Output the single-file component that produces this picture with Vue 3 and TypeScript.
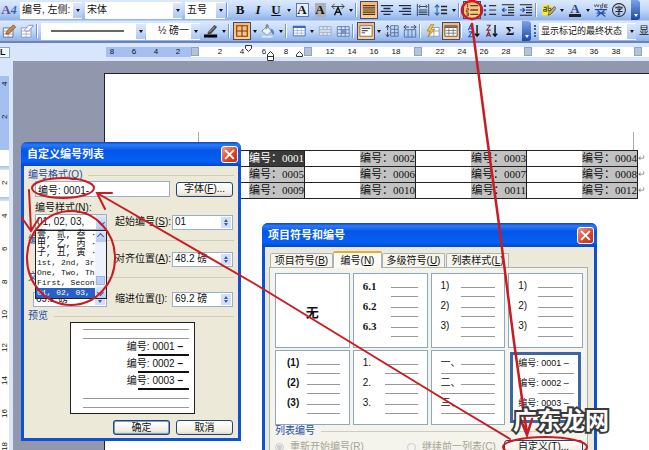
<script setup lang="ts">
import { ref } from 'vue'

interface Shape { d: string; s?: string; f?: string; w?: number }
interface Item { kind: 'icon' | 'glyph' | 'drop' | 'sep'; label?: string; text?: string; cls?: string; on?: boolean; shapes?: Shape[] }

const ink = '#2b3a66'
const sep: Item = { kind: 'sep' }
const drop: Item = { kind: 'drop', label: '更多' }
const icon = (label: string, shapes: Shape[], on = false): Item => ({ kind: 'icon', label, shapes, on })
const glyph = (text: string, cls: string, label: string): Item => ({ kind: 'glyph', text, cls, label })

const formatTools: Item[] = [
  sep,
  glyph('B', 'bold', '加粗'),
  glyph('I', 'ital', '倾斜'),
  glyph('U', 'under', '下划线'),
  drop,
  glyph('A', 'boxed', '字符边框'),
  glyph('A', 'shaded', '字符底纹'),
  icon('字符缩放', [{ d: 'M4 14L8 5L12 14M6 10.5H10', s: '#111', w: 1.6 }, { d: 'M1 4H15M4 1L1 4L4 7M12 1L15 4L12 7', s: '#333' }]),
  drop,
  sep,
  icon('两端对齐', [{ d: 'M1 3H15M1 5.5H15M1 8H15M1 10.5H15M1 13H15', s: '#4a3516', w: 1.4 }], true),
  icon('居中', [{ d: 'M1 3H15M4 6.3H12M1 9.6H15M4 13H12', s: '#222c48', w: 1.6 }]),
  icon('右对齐', [{ d: 'M1 3H15M5 6.3H15M1 9.6H15M5 13H15', s: '#222c48', w: 1.6 }]),
  icon('分散对齐', [{ d: 'M1.5 1V15M14.500 1V15', s: ink }, { d: 'M4 4H12M3 8H13M3 10.5H13M3 13H13', s: '#345', w: 1.4 }, { d: 'M5 2L3 4L5 6M11 2L13 4L11 6', s: ink }]),
  icon('行距', [{ d: 'M3.5 2V14M1 5L3.5 2L6 5M1 11L3.5 14L6 11', s: '#2d5fa8', w: 1.2 }, { d: 'M8 4H15M8 8H15M8 12H15', s: '#222', w: 1.5 }]),
  drop,
  sep,
  icon('编号', [{ d: 'M3 1V5M1.500 6.500H4V8H1.5V10H4M1.5 11.5H4V14.500H1.5M2 13H4', s: '#6b3d10' }, { d: 'M6 3H15M6 8H15M6 13H15', s: '#5a4630', w: 1.6 }], true),
  icon('项目符号', [{ d: 'M1 2H3.500V4.500H1ZM1 7H3.500V9.500H1ZM1 12H3.500V14.500H1Z', f: '#2450a8' }, { d: 'M7 3H15M7 8H15M7 13H15', s: '#333', w: 1.4 }]),
  icon('减少缩进', [{ d: 'M1 2H15M8 5H15M8 8H15M8 11H15M1 14H15', s: '#222', w: 1.4 }, { d: 'M6.5 8H2M4 5.5L1.5 8L4 10.5', s: '#2450a8', w: 1.4 }]),
  icon('增加缩进', [{ d: 'M1 2H15M8 5H15M8 8H15M8 11H15M1 14H15', s: '#222', w: 1.4 }, { d: 'M1 8H6M4 5.5L6.5 8L4 10.5', s: '#2450a8', w: 1.4 }]),
  sep,
  icon('突出显示', [{ d: 'M0 2H11V14H0Z', f: '#f6ea3c' }, { d: 'M2 5H5V9.500H2V7.500H5M7 2.5V9H10V6H7', s: '#554', w: 1.2 }, { d: 'M7 14L8 11L14 4L16 6L10 13Z', f: '#c9a96a', s: '#555' }]),
  drop,
  glyph('A', 'color', '字体颜色'),
  drop,
  icon('拼音指南', [{ d: 'M0 1.5L1.500 4.5L3 1.5L4.500 4.5L6 1.5M10 0V5H7.500V2.5H10M15.500 2H12V5H15.500M12 3.5H15', s: '#555' }, { d: 'M1 7.500H15M8 6V8M4 8.500L13 15.500M12 8.500L3 15.500M3 11.500H13', s: '#2450a8', w: 1.3 }]),
  icon('带圈字符', [{ d: 'M8 0.700A7.300 7.300 0 1 1 7.9 0.700Z', s: '#333', w: 1.2 }, { d: 'M8 3V4.5M4.5 6.300V4.8H11.5V6.300M6 7H10L8 8.5V13H6.5M4 9.8H12', s: '#222', w: 1.2 }]),
]

const tableTools: Item[] = [
  icon('边框颜色', [{ d: 'M4.5 9L12 1L15 3.5L8 11L4 12Z', f: '#444' }, { d: 'M6 9.5L12.500 3', s: '#bbb' }, { d: 'M0 12H15V15.500H0Z', f: '#000' }]),
  drop,
  sep,
  icon('外侧框线', [{ d: 'M2 2H14V14H2ZM8 2V14M2 8H14', s: '#7a3d08', w: 1.3 }], true),
  drop,
  icon('底纹颜色', [{ d: 'M1 8L7 2.500L12 8L7 13Z', f: '#eef2fa', s: '#7b8da8' }, { d: 'M6 6V1H8V5', s: '#667' }, { d: 'M11 5C15 6 15 9 15 12C12 12 12 9 11 8Z', f: '#5b86c8' }, { d: 'M1 14.500H13', s: '#dfe8f6', w: 2 }]),
  drop,
  sep,
  icon('插入表格', [{ d: 'M1.5 2.5H15V13.5H1.5Z', s: '#3d68ae', f: '#fff' }, { d: 'M1 3.5H15.500', s: '#3d68ae', w: 2.200 }, { d: 'M2 7.5H15M2 10.5H15M6 5V13M10.5 5V13', s: '#9fb7dc' }]),
  drop,
  icon('合并单元格', [{ d: 'M1.5 3H15V13H1.5ZM2 6.5H15M2 9.5H15M6 3V6M10.5 3V6M6 10V13M10.5 10V13', s: '#9aa9c4', f: '#dbe5f5' }]),
  icon('拆分单元格', [{ d: 'M1.5 3H15V14H1.5ZM2 6.5H15M2 10.500H15M6 3V14M10.5 3V14', s: '#5577ab', f: '#dbe5f5' }, { d: 'M6 6.500H12V11H6Z', f: '#6c92d0' }]),
  sep,
  icon('对齐方式', [{ d: 'M1 2H15V14H1Z', s: '#666', f: '#fff' }, { d: 'M3 5H13M3 7.5H10M3 10H7', s: '#555', w: 1.3 }], true),
  drop,
  icon('平均分布各行', [{ d: 'M6.500 2H15V14H6.5ZM7 6H15M7 10H15M11 2V14', s: '#4a6ba0' }, { d: 'M3 1.500V7M1 4L3 1.500L5 4M3 9V14.500M1 12L3 14.500L5 12', s: '#333' }]),
  icon('平均分布各列', [{ d: 'M1.500 6.5H14.5V15H1.500ZM5.800 6V15M10.200 6V15', s: '#4a6ba0' }, { d: 'M1 3.5H7M3.500 1L1 3.5L3.500 6M9 3.5H15M12.500 1L15 3.5L12.500 6', s: '#333' }]),
  sep,
  icon('自动套用格式', [{ d: 'M4 4H15V14H4ZM4 8H15M9 5V14', s: '#8b98ac', f: '#fff' }, { d: 'M6 0L1 8H5L2 15L10 6H6L9 0Z', f: '#f3c544', s: '#b48a2a' }]),
  icon('显示虚框', [{ d: 'M1 2H15V14H1Z', s: '#5a4a35', f: '#fff' }, { d: 'M1 3.500H15', s: '#765', w: 2.200 }, { d: 'M2 7.5H14M2 10.5H14M5.5 5V13M10.5 5V13', s: '#777' }], true),
  sep,
  icon('升序排序', [{ d: 'M1.500 7L4 1.500L6.500 7M2.500 5.5H5.500M2 9H6L2 14.500H6.500', s: '#2450a8', w: 1.2 }, { d: 'M11.5 1V13M9 11L11.5 14L14 11', s: '#111', w: 1.6 }]),
  icon('降序排序', [{ d: 'M2 1.500H6L2 7H6.500M1.500 14.500L4 9L6.500 14.500M2.500 13H5.500', s: '#733', w: 1.2 }, { d: 'M11.5 1V13M9 11L11.5 14L14 11', s: '#111', w: 1.6 }]),
  glyph('Σ', 'sigma', '自动求和'),
]

const drawTools: Item[] = [
  icon('绘制表格', [{ d: 'M1.5 4.5H12.5V15H1.5Z', s: '#667', f: '#fff' }, { d: 'M2 8H12M2 11.5H12M7 5V15', s: '#99a' }, { d: 'M5 9L13 1L15.500 3.500L8 11L4.5 11.5Z', f: '#c88a4a', s: '#7a5430' }]),
  icon('擦除', [{ d: 'M1.5 4.5H12.5V15H1.5Z', s: '#8a95ae', f: '#fff' }, { d: 'M2 8H12M2 11.5H12M7 5V15', s: '#aab' }, { d: 'M5 7L10 1.500H15.500L10 8H6Z', f: '#f4f6fb', s: '#8590a8' }]),
]

const rulerLeft = ['8', '6', '4', '2']
const rulerRight = ['2', '4', '6', '8', '', '12', '14', '16', '18', '', '22', '24', '26', '28', '', '32', '34', '36', '38', '']
const sideRuler = ['2', '4', '6', '8', '10', '12', '14', '16', '18']

const docRows = [
  ['0001', '0002', '0003', '0004'],
  ['0005', '0006', '0007', '0008'],
  ['0009', '0010', '0011', '0012'],
]

const styleOptions = ['壹, 贰, 叁 ··', '甲, 乙, 丙 ··', '子, 丑, 寅 ··', '1st, 2nd, 3r', 'One, Two, Th', 'First, Secon', '01, 02, 03,']
const numberFormat = ref('编号: 0001-')
const startAt = ref('01')
const alignAt = ref('48.2 磅')
const indentAt = ref('69.2 磅')
const tabAt = ref('69.2 磅')

const tabs = [['项目符号', 'B'], ['编号', 'N'], ['多级符号', 'U'], ['列表样式', 'L']]
const activeTab = ref(1)
const samples = [
  { kind: 'none', marks: [] as string[] },
  { kind: 'serif', marks: ['6.1', '6.2', '6.3'] },
  { kind: 'plain', marks: ['1)', '2)', '3)'] },
  { kind: 'plain', marks: ['1)', '2)', '3)'] },
  { kind: 'heavy', marks: ['(1)', '(2)', '(3)'] },
  { kind: 'thin', marks: ['1.', '2.', '3.'] },
  { kind: 'han', marks: ['一、', '二、', '三、'] },
  { kind: 'chosen', marks: ['编号: 0001 –', '编号: 0002 –', '编号: 0003 –'] },
]
</script>

<template>
  <div class="app">
    <header>
      <div class="bar">
        <button class="tool" aria-label="样式和格式"><span class="aa">A<i>4</i></span></button>
        <div class="combo w-style"><span>编号, 左侧:</span><button aria-label="样式"><b class="tri"></b></button></div>
        <div class="combo w-font"><span>宋体</span><button aria-label="字体"><b class="tri"></b></button></div>
        <div class="combo w-size"><span>五号</span><button aria-label="字号"><b class="tri"></b></button></div>
        <template v-for="(t, i) in formatTools" :key="i">
          <i v-if="t.kind === 'sep'" class="sep"></i>
          <button v-else-if="t.kind === 'drop'" class="drop" :aria-label="t.label"><b class="tri"></b></button>
          <button v-else class="tool" :class="{ on: t.on }" :aria-label="t.label">
            <span v-if="t.kind === 'glyph'" class="glyph" :class="t.cls">{{ t.text }}</span>
            <svg v-else viewBox="0 0 16 16"><path v-for="(p, j) in t.shapes" :key="j" :d="p.d" :stroke="p.s || 'none'" :fill="p.f || 'none'" :stroke-width="p.w || 1" /></svg>
          </button>
        </template>
        <button class="cap" aria-label="工具栏选项"><b class="tri light"></b></button>
      </div>
      <div class="bar">
        <button v-for="(t, i) in drawTools" :key="i" class="tool" :aria-label="t.label">
          <svg viewBox="0 0 16 16"><path v-for="(p, j) in t.shapes" :key="j" :d="p.d" :stroke="p.s || 'none'" :fill="p.f || 'none'" /></svg>
        </button>
        <i class="sep"></i>
        <div class="combo w-line"><hr><button aria-label="线型"><b class="tri"></b></button></div>
        <div class="combo w-weight"><span>½ 磅一</span><button aria-label="粗细"><b class="tri"></b></button></div>
        <template v-for="(t, i) in tableTools" :key="i">
          <i v-if="t.kind === 'sep'" class="sep"></i>
          <button v-else-if="t.kind === 'drop'" class="drop" :aria-label="t.label"><b class="tri"></b></button>
          <button v-else class="tool" :class="{ on: t.on }" :aria-label="t.label">
            <span v-if="t.kind === 'glyph'" class="glyph" :class="t.cls">{{ t.text }}</span>
            <svg v-else viewBox="0 0 16 16"><path v-for="(p, j) in t.shapes" :key="j" :d="p.d" :stroke="p.s || 'none'" :fill="p.f || 'none'" :stroke-width="p.w || 1" /></svg>
          </button>
        </template>
        <button class="cap" aria-label="工具栏选项"><b class="tri light"></b></button>
        <i class="grip"></i>
        <div class="combo w-review"><span>显示标记的最终状态</span><button aria-label="显示以审阅"><b class="tri"></b></button></div>
        <button class="more">显</button>
      </div>
    </header>

    <div class="ruler">
      <span class="corner">L</span>
      <div class="scale">
        <div class="margin-part"><span v-for="n in rulerLeft" :key="n">{{ n }}</span></div>
        <i class="stop"></i>
        <div class="text-part"><span v-for="(n, i) in rulerRight" :key="i"><i v-if="!n" class="stop"></i>{{ n }}</span></div>
      </div>
      <svg class="markers" width="80" height="18" viewBox="0 0 80 18" fill="#fff" stroke="#333">
        <path d="M5.500 2.500H11.500V5.500L8.500 8.500L5.500 5.500Z" />
        <path d="M27.500 17.500V11.500L30.500 8.500L33.500 11.500V17.500ZM27.500 13.500H33.500" />
        <path d="M56.500 13.500V11.500L59.500 8.500L62.500 11.500V13.500Z" />
      </svg>
    </div>

    <main>
      <aside>
        <div class="v-margin"><span>4</span><span>2</span></div>
        <div class="v-text"><span v-for="n in sideRuler" :key="n">{{ n }}</span></div>
      </aside>
      <section class="desk">
        <article class="page">
          <div class="crops"><i></i><i></i></div>
          <table>
            <tbody>
              <tr v-for="(r, i) in docRows" :key="i">
                <td v-for="(c, j) in r" :key="c" :class="{ first: i + j === 0 }"><span>编号：{{ c }}</span></td>
                <td class="mark">↵</td>
              </tr>
            </tbody>
          </table>
        </article>
      </section>
    </main>

    <section class="dialog format" role="dialog" aria-label="自定义编号列表">
      <div class="title"><h2>自定义编号列表</h2><button class="close" aria-label="关闭"><svg viewBox="0 0 12 12"><path d="M2 2L10 10M10 2L2 10" stroke="#fff" stroke-width="1.800" /></svg></button></div>
      <form class="body" @submit.prevent>
        <div class="legend"><label for="fmt">编号格式(<u>O</u>)</label></div>
        <div class="line">
          <input id="fmt" v-model="numberFormat" class="field">
          <button type="button" class="btn">字体(<u>F</u>)...</button>
        </div>
        <label class="sub" for="sty">编号样式(<u>N</u>):</label>
        <div class="line">
          <div class="pick">
            <select id="sty"><option>01, 02, 03,</option></select><b class="chev"></b>
            <div class="menu">
              <ul role="listbox" aria-label="编号样式"><li v-for="(o, i) in styleOptions" :key="o" role="option" :class="{ han: i < 3, sel: i === 6 }">{{ o }}</li></ul>
              <div class="scroll"><b class="up"></b><i></i><b class="down"></b></div>
            </div>
          </div>
          <label for="start">起始编号(<u>S</u>):</label>
          <span class="spin"><input id="start" v-model="startAt"><i></i></span>
        </div>
        <div class="legend">编号位置</div>
        <div class="line">
          <div class="pick"></div>
          <label for="align">对齐位置(<u>A</u>):</label>
          <span class="spin"><input id="align" v-model="alignAt"><i></i></span>
        </div>
        <div class="legend">文字位置</div>
        <div class="line low">
          <span class="spin left"><input v-model="tabAt" aria-label="制表位位置"><i></i></span>
          <label for="indent">缩进位置(<u>I</u>):</label>
          <span class="spin"><input id="indent" v-model="indentAt"><i></i></span>
        </div>
        <div class="legend">预览</div>
        <div class="preview">
          <hr><hr>
          <p v-for="n in 3" :key="n">编号: 000{{ n }} <b>–</b></p>
          <hr><hr>
        </div>
        <div class="actions"><button type="button" class="btn default">确定</button><button type="button" class="btn">取消</button></div>
      </form>
    </section>

    <section class="dialog bullets" role="dialog" aria-label="项目符号和编号">
      <div class="title"><h2>项目符号和编号</h2><button class="close" aria-label="关闭"><svg viewBox="0 0 12 12"><path d="M2 2L10 10M10 2L2 10" stroke="#fff" stroke-width="1.800" /></svg></button></div>
      <div class="sheet">
        <div class="tabs" role="tablist">
          <button v-for="(t, i) in tabs" :key="t[0]" role="tab" :class="{ active: i === activeTab }" @click="activeTab = i">{{ t[0] }}(<u>{{ t[1] }}</u>)</button>
        </div>
        <div class="panel">
          <div class="grid">
            <button v-for="(s, i) in samples" :key="i" class="cell" :class="s.kind">
              <strong v-if="!s.marks.length">无</strong>
              <span v-for="m in s.marks" :key="m" class="entry"><em>{{ m }}</em><i class="rule"></i><i class="rule second"></i></span>
            </button>
          </div>
          <div class="legend">列表编号</div>
          <div class="choices">
            <label><input type="radio" name="restart" checked disabled>重新开始编号(<u>R</u>)</label>
            <label><input type="radio" name="restart" disabled>继续前一列表(<u>C</u>)</label>
            <button class="btn">自定义(<u>T</u>)...</button>
          </div>
        </div>
      </div>
    </section>

    <div class="stamp">广东龙网</div>
    <svg class="notes" width="649" height="450" viewBox="0 0 649 450" fill="none" stroke="#c81c22" stroke-width="2" stroke-linecap="round" aria-hidden="true">
      <ellipse cx="472" cy="10" rx="10" ry="9" stroke-width="2.500" />
      <path d="M472 24L486 130L498 217L514 342L527 434M520 418L527 435L532 419" stroke-width="2.500" />
      <ellipse cx="63" cy="188" rx="31" ry="10" />
      <path d="M510 439L455 406L255 284L97 193M112 193L97 193L105 209" />
      <path d="M29 190L31 230M22 218L31 231L39 218" />
      <ellipse cx="71" cy="258" rx="44" ry="47" />
      <ellipse cx="545" cy="447" rx="42" ry="10" />
    </svg>
  </div>
</template>

<style>
body { margin: 0; overflow: hidden; }
</style>

<style scoped>
* { box-sizing: border-box; }
button, input, select { font: inherit; color: inherit; margin: 0; padding: 0; border: 0; background: none; border-radius: 0; min-width: 0; }
h2, p, ul, hr { margin: 0; padding: 0; }
hr { border: 0; }
.app { position: relative; display: flex; flex-direction: column; height: 100vh; overflow: hidden; font: 10px/12px "Liberation Sans", "Noto Sans CJK SC", sans-serif; color: #111; background: #9198ae; }
header { background: #b5cff8; border-bottom: 2px solid #6a84b8; }
.bar { display: flex; align-items: center; height: 20px; background: linear-gradient(#dce9fd, #c0d7f9 50%, #8fb2ea); margin-bottom: 1px; white-space: nowrap; overflow: hidden; }
.bar > * { flex: none; }
.bar:last-child { margin-bottom: 0; }
.tool { width: 18px; height: 18px; display: flex; align-items: center; justify-content: center; }
.tool svg { width: 14px; height: 14px; display: block; flex: none; }
.tool.on { background: linear-gradient(#f7b773, #fbcf94); border: 1px solid #4b4a6e; }
.aa { font: bold 13px/16px "Liberation Serif", serif; color: #6a4a96; }
.aa i { color: #3565b5; font-size: 12px; }
.glyph { font: bold 13px/14px "Liberation Serif", serif; color: #111; }
.ital { font-style: italic; }
.under { text-decoration: underline; }
.boxed { border: 1px solid #5b79ad; width: 13px; line-height: 12px; background: #e5eefc; }
.shaded { background: #aeb0b5; width: 11px; }
.color { border-bottom: 3px solid #222; line-height: 11px; width: 12px; color: #2c437c; }
.drop { width: 8px; height: 18px; display: flex; align-items: center; justify-content: center; }
.tri { border: 2px solid transparent; border-top: 3px solid #111; border-bottom: 0; display: block; }
.tri.light { border-top-color: #fff; }
.sep { width: 5px; height: 14px; border-left: 1px solid #7195d3; background: linear-gradient(90deg, #fff 1px, transparent 1px); }
.combo { height: 17px; display: flex; background: #fff; align-items: center; margin-right: 3px; padding-left: 2px; }
.combo span { flex: 1; overflow: hidden; font-size: 10px; }
.combo button { width: 9px; height: 15px; background: linear-gradient(#dbe8fc, #adc8f3); display: flex; align-items: center; justify-content: center; }
.w-style { width: 62px; margin-left: 2px; }
.w-font { width: 97px; }
.w-size { width: 40px; margin-right: 1px; }
.w-line { width: 104px; margin-right: 1px; }
.w-line hr { flex: 1; height: 2px; background: #666; margin: 0 12px 0 8px; }
.w-weight { width: 54px; margin-right: 2px; }
.w-weight span { text-align: right; padding-right: 2px; }
.w-review { width: 97px; }
.w-review span { font-size: 9px; }
.cap { width: 9px; height: 20px; background: linear-gradient(#7ba2e7, #1c49a4); border-radius: 0 3px 3px 0; display: flex; align-items: flex-end; justify-content: center; padding-bottom: 3px; margin-left: 3px; }
.grip { width: 2px; height: 12px; margin: 0 3px; border-left: 2px dotted #3f5f9e; }

.ruler { position: relative; display: flex; align-items: center; height: 18px; background: #d8e5fa; flex: none; }
.corner { width: 10px; height: 11px; border: 1px solid #8aa3cc; border-left: 0; font: bold 9px/9px "Liberation Sans", sans-serif; background: #f3f7fd; }
.scale { flex: 1; display: flex; margin-left: 96px; height: 10px; background: #fff; font-size: 8px; line-height: 10px; overflow: hidden; }
.scale span { width: 22px; flex: none; text-align: center; display: flex; justify-content: center; }
.margin-part { display: flex; background: #a5bff0; width: 85px; flex: none; }
.margin-part span { padding-right: 10px; }
.text-part { display: flex; padding-left: 10px; }
.stop { width: 8px; height: 9px; flex: none; border: 1px solid #8fa3c4; background: #b5c3da; }
.markers { position: absolute; left: 240px; top: 0; }

main { flex: 1; display: flex; min-height: 0; }
aside { width: 13px; background: #d8e5fa; padding-top: 15px; padding-right: 4px; display: flex; flex-direction: column; flex: none; font-size: 8px; line-height: 9px; overflow: hidden; }
aside span { writing-mode: vertical-rl; transform: rotate(180deg); height: 33px; flex: none; text-align: center; }
.v-margin { height: 74px; background: #a5bff0; flex: none; display: flex; flex-direction: column; justify-content: flex-end; align-items: center; padding-bottom: 17px; }
.v-text { flex: 1; background: linear-gradient(transparent 16px, #a9bfe6 16px, #d8e5fa 20px, transparent 20px, transparent 47px, #a9bfe6 47px, #d8e5fa 51px, transparent 51px), #fff; display: flex; flex-direction: column; align-items: center; padding-top: 16px; }
.desk { flex: 1; padding: 12px 0 0 91px; min-width: 0; display: flex; }
.page { flex: 1; background: #fff; border: 1px solid #222; border-width: 1px 0 0 1px; min-width: 0; }
.crops { height: 76px; margin: 0 15px 0 93px; display: flex; justify-content: space-between; align-items: flex-end; }
.crops i { width: 1px; height: 18px; background: #aaa; }
table { border-collapse: collapse; margin-left: 88px; width: 456px; table-layout: fixed; font: 11px/15px "Liberation Serif", "Noto Sans CJK SC", serif; }
td { height: 16px; padding: 0; border: 1px solid #222; text-align: right; width: 111px; line-height: 15px; }
td span { background: #c2c2c2; display: inline-block; height: 15px; vertical-align: top; }
td.first span { background: #3a3a3a; color: #fff; }
td.mark { border: 0; width: 12px; text-align: left; color: #888; font-size: 9px; }

.dialog { position: absolute; background: #ece9d8; border: 3px solid #0e50d8; border-top: 0; border-radius: 6px 6px 0 0; }
.format { left: 21px; top: 142px; width: 220px; height: 299px; }
.bullets { left: 262px; top: 223px; width: 335px; height: 240px; }
.title { height: 24px; margin: 0 -3px; padding: 0 3px 0 6px; display: flex; align-items: center; justify-content: space-between; background: linear-gradient(#0a46c0, #2b7bfa 12%, #0556e6 35%, #0460f5 80%, #0747c4); border-radius: 6px 6px 0 0; }
h2 { font: bold 11px/16px "Liberation Sans", "Noto Sans CJK SC", sans-serif; color: #fff; }
.close { width: 17px; height: 17px; background: linear-gradient(135deg, #f09a80, #d9452a 60%, #b5341c); border: 1px solid #fff; border-radius: 3px; padding: 1px; display: flex; }
.body { padding: 3px 4px 0; display: flex; flex-direction: column; }
.legend { display: flex; align-items: center; gap: 6px; height: 12px; color: #1e4ea8; }
.legend::after { content: ""; flex: 1; height: 1px; background: #d0cdbb; }
.line { display: flex; align-items: center; height: 16px; padding: 0 1px 0 7px; gap: 8px; }
.line:has(.field) { gap: 6px; }
.field { flex: 1; height: 16px; background: #fff; border: 1px solid #9ab0c8; padding-left: 2px; }
.line > label { width: 48px; white-space: nowrap; }
.sub { margin: 5px 0 0 7px; }
.body .line + .legend { margin-top: 4px; }
.legend + .line:has(.pick) { margin-top: 5px; }
.line.low { margin-top: 8px; padding-left: 5px; }
.btn { height: 15px; width: 57px; border: 1px solid #26446e; border-radius: 3px; background: linear-gradient(#fff, #efede4 80%, #dcd7c8); white-space: nowrap; line-height: 12px; }
.btn.default { border: 2px solid #7c9fdc; outline: 1px solid #26446e; outline-offset: -1px; }
.pick { position: relative; width: 72px; height: 16px; background: #fff; border: 1px solid #9ab0c8; display: flex; flex: none; }
.pick select { appearance: none; flex: 1; padding-left: 1px; line-height: 12px; }
.chev, .up, .down { width: 10px; background: linear-gradient(#dde7fd, #b5c9f5); display: flex; align-items: center; justify-content: center; flex: none; }
.chev::after, .down::after, .up::after { content: ""; width: 4px; height: 4px; border: solid #3e5a94; border-width: 0 1px 1px 0; transform: rotate(45deg); }
.up::after { transform: rotate(225deg); }
.menu { position: absolute; left: -1px; top: 15px; width: 72px; height: 69px; border: 1px solid #222; background: #fff; display: flex; z-index: 2; }
ul { list-style: none; flex: 1; white-space: nowrap; min-width: 0; }
li { font: 8px/10px "Liberation Mono", "Noto Sans CJK SC", monospace; height: 10px; padding-left: 1px; }
li.han { height: 9px; line-height: 9px; font-size: 9px; }
li.sel { background: #2a5fc8; color: #fff; }
.scroll { width: 11px; background: #eef2fd; display: flex; flex-direction: column; align-items: center; }
.scroll b { height: 11px; }
.scroll i { width: 9px; height: 9px; margin: auto 0 2px; background: #bccff8; border: 1px solid #9db4e6; }
.spin { width: 61px; height: 15px; background: #fff; border: 1px solid #9ab0c8; display: flex; margin-left: auto; flex: none; }
.spin.left { width: 74px; margin-left: 0; }
.spin input { flex: 1; width: 20px; padding-left: 2px; }
.spin i { width: 10px; background: #d3dffa; position: relative; margin: 1px; }
.spin i::before, .spin i::after { content: ""; position: absolute; left: 3px; border: 2px solid transparent; }
.spin i::before { top: 0; border-top: 0; border-bottom: 3px solid #3e5a94; top: 2px; }
.spin i::after { border-bottom: 0; border-top: 3px solid #3e5a94; bottom: 2px; }
.body .line.low + .legend { margin-top: 3px; }
.preview { align-self: center; width: 125px; height: 92px; border: 1px solid #222; background: #fff; padding: 6px 5px 0 12px; margin-left: 3px; }
.preview hr { height: 1px; background: #999; margin-bottom: 8px; }
.preview hr:nth-child(2) { margin-bottom: 0; }
.preview p { height: 17px; line-height: 16px; text-align: right; padding-right: 6px; background: linear-gradient(#111, #111) right bottom / 51px 2px no-repeat; font-size: 10px; }
.preview p + hr { margin-top: 8px; }
.actions { display: flex; justify-content: flex-end; gap: 6px; padding: 6px 1px 0; }

.sheet { padding: 3px 6px 0 4px; }
.tabs { display: flex; align-items: flex-end; height: 17px; padding-left: 1px; gap: 1px; }
.tabs button { height: 14px; width: 63px; border: 1px solid #a9b3b8; border-bottom: 0; border-radius: 2px 2px 0 0; background: #f6f4ec; white-space: nowrap; }
.tabs .active { width: 49px; height: 17px; border-top: 2px solid #f0a82e; background: #fbfaf6; margin: 0 -1px -1px; z-index: 1; }
.panel { border: 1px solid #a3b1b8; background: #f4f3ec; height: 196px; padding: 5px 4px 0 5px; }
.grid { display: grid; grid-template-columns: repeat(4, 1fr); grid-auto-rows: 75px; gap: 2px 3px; }
.cell { border: 1px solid #8da9c0; background: #fff; padding: 4px 9px 0 9px; display: flex; flex-direction: column; text-align: left; }
.cell strong { margin: auto; font-size: 13px; line-height: 16px; }
.entry { display: grid; grid-template-columns: 20px 1fr; grid-template-rows: 12px 8px; height: 20px; width: 100%; }
.entry em { font-style: normal; white-space: nowrap; line-height: 16px; height: 16px; grid-row: 1 / 3; grid-column: 1; }
.rule { grid-column: 2; height: 1px; background: #999; align-self: center; margin-top: 6px; }
.second { grid-row: 2; align-self: end; margin: 0 0 1px; }
.serif .entry { grid-template-columns: 28px 1fr; }
.serif em { font: bold 11px/16px "Liberation Serif", serif; }
.thin .entry { grid-template-columns: 22px 1fr; }
.heavy em { font-weight: bold; }
.heavy .entry { padding-left: 2px; }
.han .second { grid-column: 1 / 3; }
.chosen { border: 3px solid #3c66a8; margin: 2px; padding: 0 4px 0 5px; }
.chosen .entry em { font-size: 9px; }
.chosen .rule:not(.second) { visibility: hidden; }
.choices { display: flex; align-items: center; height: 20px; color: #a7a596; }
.choices label { display: flex; align-items: center; width: 132px; white-space: nowrap; }
.choices label + label { width: 97px; }
.choices input { width: 9px; height: 9px; margin-right: 6px; flex: none; }
.choices .btn { flex: 1; color: #111; }

.stamp { position: absolute; left: 513px; top: 405px; font: bold 24px/28px "Noto Sans CJK SC", sans-serif; color: #fff; -webkit-text-stroke: 4px #3a3a3a; paint-order: stroke fill; stroke-linejoin: round; white-space: nowrap; z-index: 4; }
.notes { position: absolute; left: 0; top: 0; z-index: 3; pointer-events: none; }
</style>
